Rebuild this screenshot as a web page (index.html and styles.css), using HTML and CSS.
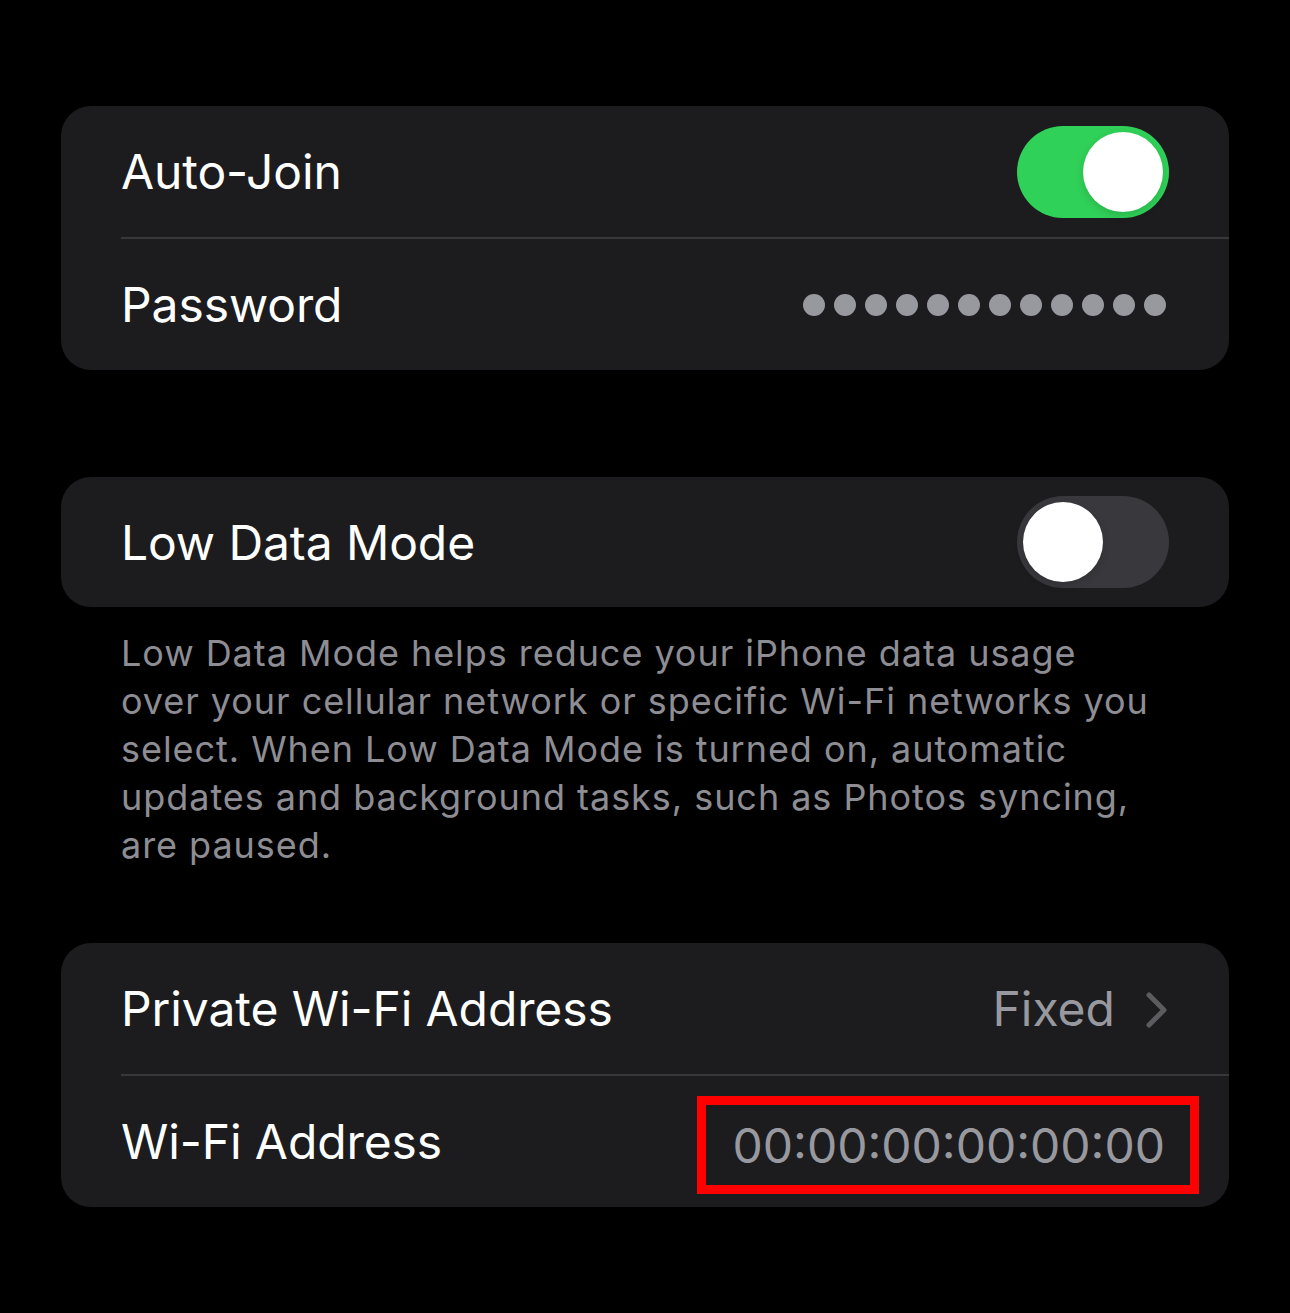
FILE: index.html
```html
<!DOCTYPE html>
<html>
<head>
<meta charset="utf-8">
<link rel="stylesheet" href="styles.css">
</head>
<body>
<div class="page">
  <div class="card first">
    <div class="row">
      <span class="label">Auto-Join</span>
      <span class="toggle on"><span class="knob"></span></span>
    </div>
    <div class="row">
      <span class="label">Password</span>
      <span class="dots">
        <i></i><i></i><i></i><i></i><i></i><i></i><i></i><i></i><i></i><i></i><i></i><i></i>
      </span>
    </div>
  </div>

  <div class="card second">
    <div class="row single">
      <span class="label">Low Data Mode</span>
      <span class="toggle off"><span class="knob"></span></span>
    </div>
  </div>
  <p class="footer">Low Data Mode helps reduce your iPhone data usage over your cellular network or specific Wi-Fi networks you select. When Low Data Mode is turned on, automatic updates and background tasks, such as Photos syncing, are paused.</p>

  <div class="card third">
    <div class="row">
      <span class="label">Private Wi-Fi Address</span>
      <span class="value">Fixed
        <svg class="chev" width="24" height="38" viewBox="0 0 24 38"><path d="M4 4 L19 19 L4 34" fill="none" stroke="#5b5b60" stroke-width="5" stroke-linecap="round" stroke-linejoin="round"/></svg>
      </span>
    </div>
    <div class="row">
      <span class="label">Wi-Fi Address</span>
      <span class="mac">00:00:00:00:00:00</span>
    </div>
  </div>
</div>
</body>
</html>
```

FILE: styles.css
```css
html, body {
  margin: 0;
  padding: 0;
  background: #000;
}
body {
  width: 1290px;
  height: 1313px;
  overflow: hidden;
  font-family: "Inter", "Open Sans", "Liberation Sans", sans-serif;
  color: #fff;
}
.page {
  padding: 106px 61px 0 61px;
}
.card {
  background: #1c1c1e;
  border-radius: 30px;
  overflow: hidden;
}
.row {
  display: flex;
  align-items: center;
  justify-content: space-between;
  height: 131px;
  margin-left: 60px;
  padding-right: 60px;
}
.row + .row {
  border-top: 2px solid #38383a;
  height: 131px;
}
.single {
  height: 130px;
}
.label {
  font-size: 48px;
  letter-spacing: -0.1px;
}
.toggle {
  width: 152px;
  height: 92px;
  border-radius: 46px;
  display: flex;
  align-items: center;
  padding: 0 6px;
  box-sizing: border-box;
}
.toggle.on {
  background: #30d158;
  justify-content: flex-end;
}
.toggle.off {
  background: #39393d;
  justify-content: flex-start;
}
.knob {
  width: 80px;
  height: 80px;
  border-radius: 50%;
  background: #fff;
  box-shadow: 0 3px 8px rgba(0,0,0,0.15);
}
.dots {
  display: flex;
  gap: 9px;
  margin-right: 3px;
}
.dots i {
  display: block;
  width: 22px;
  height: 22px;
  border-radius: 50%;
  background: #98989f;
}
.second {
  margin-top: 107px;
}
.footer {
  margin: 22px 0 0 60px;
  padding-right: 74px;
  font-size: 36px;
  line-height: 48px;
  color: #8d8d93;
  letter-spacing: 0.95px;
}
.third {
  margin-top: 74px;
}
.value {
  display: flex;
  align-items: center;
  gap: 30px;
  font-size: 48px;
  color: #98989f;
}
.chev {
  display: block;
  margin-top: 2px;
}
.mac {
  font-size: 48px;
  color: #98989f;
  height: 98px;
  box-sizing: border-box;
  display: flex;
  align-items: center;
  border: 9px solid #ff0000;
  padding: 0 25px 0 26px;
  margin-right: -30px;
  margin-top: 7px;
}
```
